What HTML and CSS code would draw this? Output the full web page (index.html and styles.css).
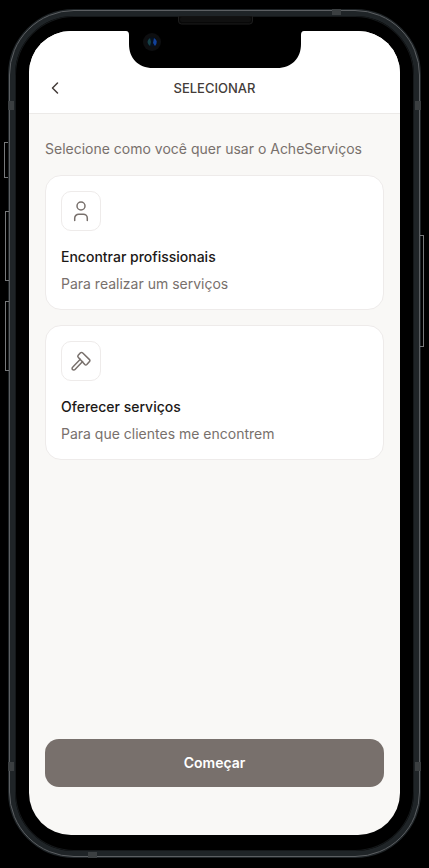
FILE: index.html
```html
<!DOCTYPE html>
<html lang="pt-BR">
<head>
<meta charset="utf-8">
<meta name="viewport" content="width=device-width, initial-scale=1">
<title>AcheServiços</title>
<link rel="stylesheet" href="styles.css">
</head>
<body>
<div class="phone">
  <span class="key key-mute"></span>
  <span class="key key-up"></span>
  <span class="key key-down"></span>
  <span class="key key-power"></span>
  <span class="band band-left-top"></span>
  <span class="band band-right-top"></span>
  <span class="band band-left-bottom"></span>
  <span class="band band-right-bottom"></span>
  <span class="band band-top"></span>
  <span class="band band-bottom"></span>
  <svg class="notch" width="180" height="52" viewBox="0 0 180 52" aria-hidden="true">
    <path d="M0 15h1q3 0 3 4v9c0 14 9 24 24 24h124c15 0 24-10 24-24v-9q0-4 3-4h1V8H0z" fill="#000"/>
    <path d="M53.500 0v5q0 3 3 3h68q3 0 3-3v-5z" fill="#080808" stroke="#1d1d1d"/>
    <rect x="55" y="1" width="71" height="5" rx="2" fill="#101010"/>
    <circle cx="27" cy="26" r="9" fill="#0d0e10"/>
    <circle cx="27" cy="26" r="5" fill="#07101c"/>
    <path d="M25 22q-5 4 0 8l1-4z" fill="#164247"/>
    <path d="M29 22q5 3 1 8l-2-3z" fill="#12419a"/>
  </svg>
  <div class="screen">
    <header class="header">
      <button class="back" type="button" aria-label="Voltar">
        <svg width="20" height="20" viewBox="0 0 20 20" aria-hidden="true"><path d="M12.500 5 7.500 10l5 5"/></svg>
      </button>
      <h1 class="title">SELECIONAR</h1>
    </header>
    <main class="content">
      <p class="intro">Selecione como você quer usar o AcheServiços</p>
      <button class="card" type="button">
        <span class="icon">
          <svg width="24" height="24" viewBox="0 0 24 24" aria-hidden="true"><circle cx="12" cy="7" r="4"/><path d="M5.700 21.500v-2.300a4 4 0 0 1 4-4h4.600a4 4 0 0 1 4 4v2.300"/></svg>
        </span>
        <span class="card-title">Encontrar profissionais</span>
        <span class="card-text">Para realizar um serviços</span>
      </button>
      <button class="card" type="button">
        <span class="icon">
          <svg width="24" height="24" viewBox="0 0 24 24" aria-hidden="true"><path d="M9.200 8.200a1.400 1.400 0 0 1 0-1.900l2.300-2.500a1.400 1.400 0 0 1 2 0l7 6.800a1.400 1.400 0 0 1 0 2l-2.700 3a1.400 1.400 0 0 1-2 0z"/><path d="m11.300 10.300-7.700 7.900a1.650 1.650 0 0 0 0 2.400 1.650 1.650 0 0 0 2.400 0l7.600-8"/></svg>
        </span>
        <span class="card-title">Oferecer serviços</span>
        <span class="card-text">Para que clientes me encontrem</span>
      </button>
      <button class="start" type="button">Começar</button>
    </main>
  </div>
</div>
</body>
</html>
```
FILE: styles.css
```css
* { box-sizing: border-box; }

body {
  margin: 0;
  min-height: 100vh;
  padding: 9px 8px 10px;
  display: flex;
  background: #000;
  font-family: Inter, "Liberation Sans", sans-serif;
}

button { font: inherit; color: inherit; cursor: pointer; }

.phone {
  position: relative;
  flex: 1;
  display: flex;
  padding: 15px 14px 16px;
  border: 7px solid #1f2427;
  border-radius: 66px;
  background: #000;
  box-shadow: inset 0 0 0 1px #15181a;
}

.phone::before {
  content: "";
  position: absolute;
  inset: -6px;
  border: 1px solid #5c5f62;
  border-radius: 65px;
}

.notch {
  position: absolute;
  top: 0;
  left: 50%;
  transform: translateX(-50%);
}

.key {
  position: absolute;
  width: 4px;
  border: 1px solid #77797b;
}
.key-mute, .key-up, .key-down { left: -11px; border-right: 0; }
.key-mute { top: 126px; height: 36px; }
.key-up { top: 195px; height: 70px; }
.key-down { top: 285px; height: 70px; }
.key-up, .key-down { left: -10px; }
.key-power { right: -10px; top: 219px; height: 112px; border-left: 0; }

.band { position: absolute; background: #3b3f41; z-index: 1; }
.band-left-top, .band-left-bottom { left: -7px; }
.band-right-top, .band-right-bottom { right: -7px; }
.band-left-top, .band-left-bottom, .band-right-top, .band-right-bottom { width: 6px; height: 9px; }
.band-left-top, .band-right-top { top: 85px; }
.band-left-bottom, .band-right-bottom { bottom: 80px; }
.band-top, .band-bottom { width: 9px; height: 6px; }
.band-top { top: -7px; right: 73px; }
.band-bottom { bottom: -7px; left: 73px; }

.screen {
  flex: 1;
  display: flex;
  flex-direction: column;
  overflow: hidden;
  border-radius: 42px;
  background: #f9f8f6;
}

.header {
  display: grid;
  grid-template-columns: 20px 1fr 20px;
  align-items: center;
  padding: 47px 16px 15px;
  border-bottom: 1px solid #eceae8;
  background: #fff;
}

.back {
  display: flex;
  width: 20px;
  height: 20px;
  padding: 0;
  border: 0;
  background: none;
}
.back svg { fill: none; stroke: #443c39; stroke-width: 1.500; stroke-linecap: round; stroke-linejoin: round; }

.title {
  margin: 0;
  color: #443c39;
  font-size: 13px;
  font-weight: 500;
  line-height: 20px;
  text-align: center;
}

.content {
  flex: 1;
  display: flex;
  flex-direction: column;
  gap: 15px;
  padding: 24px 16px 48px;
}

.intro {
  margin: 0;
  color: #78706c;
  font-size: 14px;
  line-height: 22px;
}

.card {
  display: flex;
  flex-direction: column;
  align-items: flex-start;
  padding: 15px 15px 14px;
  border: 1px solid #eeebea;
  border-radius: 16px;
  background: #fff;
  text-align: left;
}

.icon {
  display: grid;
  place-items: center;
  width: 40px;
  height: 40px;
  margin-bottom: 15px;
  border: 1px solid #eeebea;
  border-radius: 10px;
}
.icon svg { fill: none; stroke: #78706c; stroke-width: 1.500; stroke-linecap: round; stroke-linejoin: round; }

.card-title {
  margin-bottom: 5px;
  color: #1c1917;
  font-size: 14px;
  font-weight: 500;
  line-height: 22px;
}

.card-text {
  color: #78706c;
  font-size: 14px;
  line-height: 22px;
}

.start {
  margin-top: auto;
  padding: 13px 16px;
  border: 0;
  border-radius: 14px;
  background: #78706c;
  color: #fff;
  font-size: 14px;
  font-weight: 600;
  line-height: 22px;
}
```
